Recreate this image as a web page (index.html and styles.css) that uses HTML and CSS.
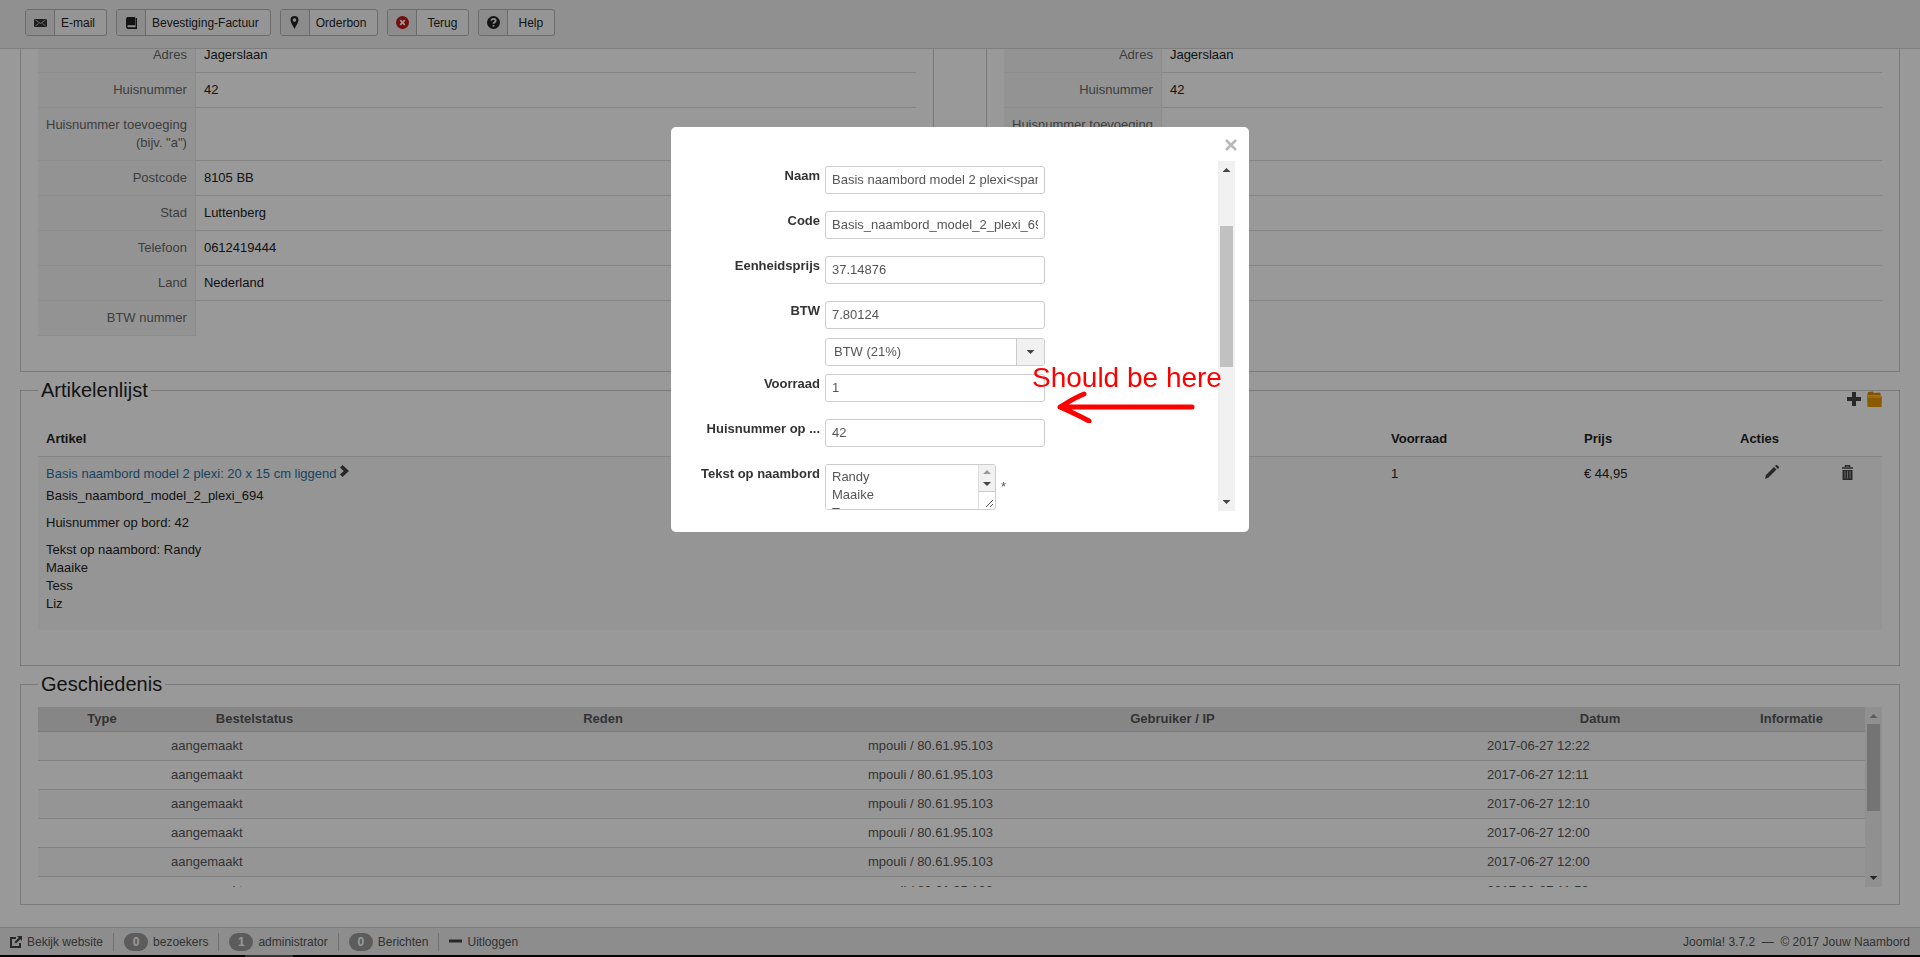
FILE: index.html
```
<!DOCTYPE html>
<html lang="nl">
<head>
  <meta charset="UTF-8">
  <meta name="viewport" content="width=device-width, initial-scale=1.0">
  <title>Bestelling - Jouw Naambord</title>
  <link rel="stylesheet" href="styles.css">
</head>
<body>
  <div class="toolbar">
    <button class="btn"><span class="btn-icon"><svg width="13" height="8" viewBox="0 0 13 8"><rect width="13" height="8" rx="1" fill="#333"/><path d="M1.500 1l5 3.500 5-3.500M1.500 7l3-2.500M11.500 7l-3-2.500" fill="none" stroke="#ddd" stroke-width=".8"/></svg></span><span class="btn-text">E-mail</span></button>
    <button class="btn"><span class="btn-icon"><svg width="11" height="12" viewBox="0 0 12 13"><path d="M2 0h8v9H2.500a1 1 0 000 2H10.500V1H12v12H2.500A2.500 2.500 0 010 10.500V2a2 2 0 012-2z" fill="#222"/></svg></span><span class="btn-text">Bevestiging-Factuur</span></button>
    <button class="btn"><span class="btn-icon"><svg width="9" height="13" viewBox="0 0 9 13"><path d="M4.500 0a4 4 0 014 4c0 2.500-2.500 5.500-4 9-1.500-3.500-4-6.500-4-9a4 4 0 014-4zm0 2.300a1.800 1.800 0 100 3.600 1.800 1.800 0 000-3.600z" fill="#222" fill-rule="evenodd"/></svg></span><span class="btn-text">Orderbon</span></button>
    <button class="btn btn-short"><span class="btn-icon"><svg width="13" height="13" viewBox="0 0 13 13"><circle cx="6.500" cy="6.500" r="6.500" fill="#bd1818"/><path d="M4.200 4.200l4.600 4.600M8.800 4.200L4.200 8.800" stroke="#fff" stroke-width="1.800"/></svg></span><span class="btn-text">Terug</span></button>
    <button class="btn btn-short"><span class="btn-icon"><svg width="13" height="13" viewBox="0 0 13 13"><circle cx="6.500" cy="6.500" r="6.500" fill="#222"/><path d="M4.300 4.800c0-2.600 4.400-2.500 4.400 0 0 1.500-2.200 1.500-2.200 3M6.500 9v1.600" fill="none" stroke="#eee" stroke-width="1.800"/></svg></span><span class="btn-text">Help</span></button>
  </div>

  <div class="main">
    <div class="addresses">
      <fieldset class="address">
        <table class="keys">
          <tr><th>Adres</th><td>Jagerslaan</td></tr>
          <tr><th>Huisnummer</th><td>42</td></tr>
          <tr><th>Huisnummer toevoeging<br>(bijv. "a")</th><td></td></tr>
          <tr><th>Postcode</th><td>8105 BB</td></tr>
          <tr><th>Stad</th><td>Luttenberg</td></tr>
          <tr><th>Telefoon</th><td>0612419444</td></tr>
          <tr><th>Land</th><td>Nederland</td></tr>
          <tr><th>BTW nummer</th><td></td></tr>
        </table>
      </fieldset>
      <fieldset class="address">
        <table class="keys">
          <tr><th>Adres</th><td>Jagerslaan</td></tr>
          <tr><th>Huisnummer</th><td>42</td></tr>
          <tr><th>Huisnummer toevoeging<br>(bijv. "a")</th><td></td></tr>
          <tr><th>Postcode</th><td></td></tr>
          <tr><th>Stad</th><td></td></tr>
          <tr><th>Telefoon</th><td></td></tr>
          <tr><th>Land</th><td></td></tr>
          <tr><th>BTW nummer</th><td></td></tr>
        </table>
      </fieldset>
    </div>

    <fieldset>
      <legend>Artikelenlijst</legend>
      <div class="list-tools">
        <a href="#" aria-label="Toevoegen"><svg width="14" height="14" viewBox="0 0 14 14"><path d="M5 0h4v5h5v4H9v5H5V9H0V5h5z" fill="#444"/></svg></a>
        <a href="#" aria-label="Artikelen"><svg width="15" height="16" viewBox="0 0 15 16"><path d="M1 1l5-.500L7 2l6-.500 1 3H0z" fill="#d98a00"/><path d="M0 5h15l-.500 11H.500z" fill="#e89500"/><path d="M0 5h15v2H0z" fill="#ffb020"/></svg></a>
      </div>
      <table class="articles">
        <thead>
          <tr><th>Artikel</th><th class="col-stock">Voorraad</th><th class="col-price">Prijs</th><th class="col-edit">Acties</th><th class="col-delete"></th></tr>
        </thead>
        <tbody>
          <tr>
            <td>
              <div class="article-name"><a href="#">Basis naambord model 2 plexi: 20 x 15 cm liggend</a><svg width="9" height="12" viewBox="0 0 9 12"><path d="M0 2.500L2.500 0 9 6l-6.500 6L0 9.500 3.700 6z" fill="#444"/></svg></div>
              Basis_naambord_model_2_plexi_694
              <p>Huisnummer op bord: 42</p>
              <p>Tekst op naambord: Randy<br>Maaike<br>Tess<br>Liz</p>
            </td>
            <td>1</td>
            <td>€ 44,95</td>
            <td class="action"><a href="#" aria-label="Bewerken"><svg width="14" height="14" viewBox="0 0 14 14"><path d="M0 14l1-4 8-8 2.500 2.500-8 8zM10 1l1-1h1l2 2v1l-1 1z" fill="#444"/></svg></a></td>
            <td class="action"><a href="#" aria-label="Verwijderen"><svg width="11" height="15" viewBox="0 0 11 15"><path d="M3.500 2V.700h4V2M0 3h11" fill="none" stroke="#444" stroke-width="1.500"/><path d="M.500 5h10v10H.500z" fill="#444"/><path d="M3 6v7.500M5.500 6v7.500M8 6v7.500" stroke="#aaa"/></svg></a></td>
          </tr>
        </tbody>
      </table>
    </fieldset>

    <fieldset>
      <legend>Geschiedenis</legend>
      <div class="history">
        <div class="history-rows">
          <table>
            <thead>
              <tr><th class="w-type">Type</th><th class="w-status">Bestelstatus</th><th>Reden</th><th class="w-user">Gebruiker / IP</th><th class="w-date">Datum</th><th class="w-info">Informatie</th></tr>
            </thead>
            <tbody>
              <tr><td></td><td>aangemaakt</td><td></td><td>mpouli / 80.61.95.103</td><td>2017-06-27 12:22</td><td></td></tr>
              <tr><td></td><td>aangemaakt</td><td></td><td>mpouli / 80.61.95.103</td><td>2017-06-27 12:11</td><td></td></tr>
              <tr><td></td><td>aangemaakt</td><td></td><td>mpouli / 80.61.95.103</td><td>2017-06-27 12:10</td><td></td></tr>
              <tr><td></td><td>aangemaakt</td><td></td><td>mpouli / 80.61.95.103</td><td>2017-06-27 12:00</td><td></td></tr>
              <tr><td></td><td>aangemaakt</td><td></td><td>mpouli / 80.61.95.103</td><td>2017-06-27 12:00</td><td></td></tr>
              <tr><td></td><td>aangemaakt</td><td></td><td>mpouli / 80.61.95.103</td><td>2017-06-27 11:59</td><td></td></tr>
            </tbody>
          </table>
        </div>
        <div class="scrollbar"><span class="arrow up off"></span><span class="thumb"></span><span class="arrow down"></span></div>
      </div>
    </fieldset>
  </div>

  <div class="footer">
    <div class="status">
      <a class="item" href="#"><svg width="12" height="12" viewBox="0 0 12 12"><path d="M6 2H1v9h9V7" fill="none" stroke="#444" stroke-width="2"/><path d="M7 0h5v5l-1.700-1.700L6 7.600 4.400 6l4.300-4.300z" fill="#444"/></svg>Bekijk website</a>
      <span class="item"><span class="badge">0</span>bezoekers</span>
      <span class="item"><span class="badge">1</span>administrator</span>
      <a class="item" href="#"><span class="badge">0</span>Berichten</a>
      <a class="item" href="#"><svg width="13" height="12" viewBox="0 0 13 12"><path d="M0 5h13" stroke="#444" stroke-width="3"/></svg>Uitloggen</a>
    </div>
    <div>Joomla! 3.7.2 &nbsp;—&nbsp; © 2017 Jouw Naambord</div>
  </div>

  <div class="overlay">
    <div class="modal">
      <button class="close" aria-label="Sluiten"><svg width="12" height="12" viewBox="0 0 12 12"><path d="M1 1l10 10M11 1L1 11" stroke="#b8b8b8" stroke-width="2.500"/></svg></button>
      <div class="modal-body">
        <form class="form">
          <div class="row"><label for="naam">Naam</label><input type="text" id="naam" value="Basis naambord model 2 plexi&lt;span&gt;"></div>
          <div class="row"><label for="code">Code</label><input type="text" id="code" value="Basis_naambord_model_2_plexi_694"></div>
          <div class="row"><label for="prijs">Eenheidsprijs</label><input type="text" id="prijs" value="37.14876"></div>
          <div class="row row-tax">
            <label for="btw">BTW</label>
            <div class="tax">
              <input type="text" id="btw" value="7.80124">
              <div class="select">
                <select aria-label="BTW tarief"><option>BTW (21%)</option></select>
                <span class="select-arrow"><span class="arrow down"></span></span>
              </div>
            </div>
          </div>
          <div class="row"><label for="voorraad">Voorraad</label><input type="text" id="voorraad" value="1"></div>
          <div class="row"><label for="huisnummer">Huisnummer op ...</label><input type="text" id="huisnummer" value="42"></div>
          <div class="row">
            <label for="tekst">Tekst op naambord</label>
            <div class="area">
              <div class="area-box">
                <textarea id="tekst">Randy
Maaike
Tess
Liz</textarea>
                <div class="area-side">
                  <div class="area-scroll"><span class="arrow up off"></span><span class="arrow down"></span></div>
                  <svg width="16" height="17" viewBox="0 0 16 17"><path d="M7 15l7-7M11 15l3-3" stroke="#555"/></svg>
                </div>
              </div>
              <span>*</span>
            </div>
          </div>
        </form>
        <div class="scrollbar"><span class="arrow up"></span><span class="thumb"></span><span class="arrow down"></span></div>
      </div>
      <div class="note">
        Should be here
        <svg width="140" height="32" viewBox="0 0 140 32"><path d="M136 16H4C12 11 20 6 28 3M4 16c9 4 20 9 29 14" fill="none" stroke="#f00" stroke-width="5" stroke-linecap="round" stroke-linejoin="round"/></svg>
      </div>
    </div>
  </div>
  <div class="taskbar"></div>
</body>
</html>
```
FILE: styles.css
```
* {
  box-sizing: border-box;
}

body {
  margin: 0;
  background: #fff;
  color: #222;
  font-family: "Liberation Sans", Arial, sans-serif;
  font-size: 13px;
  line-height: 18px;
}

svg {
  display: block;
}

a {
  color: inherit;
  text-decoration: none;
}

/* toolbar */
.toolbar {
  position: fixed;
  top: 0;
  left: 0;
  right: 0;
  z-index: 1;
  display: flex;
  gap: 9px;
  height: 49px;
  padding: 9px 25px;
  background: #f0f0f0;
  border-bottom: 1px solid #d4d4d4;
}

.btn {
  display: flex;
  align-items: stretch;
  height: 27px;
  padding: 0;
  border: 1px solid #b3b3b3;
  border-radius: 3px;
  background: #f9f9f9;
  color: #222;
  font-family: inherit;
  font-size: 12px;
  line-height: 26px;
  overflow: hidden;
}

.btn-icon {
  display: flex;
  align-items: center;
  justify-content: center;
  width: 29px;
  background: #e9e9e9;
  border-right: 1px solid #b3b3b3;
}

.btn-text {
  padding: 0 11px 0 6px;
}

.btn-short .btn-text {
  padding: 0 11px 0 10px;
}

/* content */
.main {
  padding: 0 20px;
}

fieldset {
  position: relative;
  min-width: 0;
  margin: 0;
  padding: 5px 17px 17px;
  border: 1px solid #ccc;
}

legend {
  padding: 0 3px;
  font-size: 20px;
  line-height: 36px;
}

table {
  width: 100%;
  border-collapse: separate;
  border-spacing: 0;
}

.addresses {
  display: grid;
  grid-template-columns: 1fr 1fr;
  gap: 52px;
}

.address {
  padding: 38px 17px 35px;
  border-top: none;
}

.keys th {
  width: 157px;
  padding: 8px;
  background: #f6f6f6;
  border-right: 1px solid #e9e9e9;
  border-bottom: 1px solid #e9e9e9;
  color: #666;
  font-weight: normal;
  text-align: right;
  white-space: nowrap;
}

.keys td {
  padding: 8px;
  border-bottom: 1px solid #ddd;
  vertical-align: top;
}

.keys tr:last-child td {
  border-bottom: none;
}

.list-tools {
  position: absolute;
  top: -17px;
  right: 17px;
  display: flex;
  align-items: center;
  gap: 6px;
}

.articles {
  table-layout: fixed;
  margin: 9px 0 18px;
}

.articles th,
.articles td {
  padding: 8px;
  text-align: left;
  vertical-align: top;
}

.articles th {
  border-bottom: 1px solid #ddd;
}

.articles td {
  background: #f9f9f9;
}

.articles p {
  margin: 9px 0;
}

.col-stock { width: 193px; }
.col-price { width: 156px; }
.col-edit { width: 80px; }
.col-delete { width: 70px; }

.articles .action svg {
  margin: 0 auto;
}

.article-name {
  display: flex;
  gap: 3px;
  height: 22px;
}

.article-name a {
  color: #2a70a0;
}

.history {
  display: flex;
  height: 180px;
}

.history-rows {
  flex: 1;
  overflow: hidden;
  color: #555;
}

.history table {
  table-layout: fixed;
}

.history th {
  padding: 3px 5px;
  background: #e0e0e0;
  border-bottom: 1px solid #ccc;
}

.history td {
  padding: 5px;
  height: 29px;
  border-bottom: 1px solid #d8d8d8;
}

.history tbody tr:nth-child(odd) {
  background: #f9f9f9;
}

.w-type { width: 128px; }
.w-status { width: 177px; }
.w-user { width: 619px; }
.w-date { width: 236px; }
.w-info { width: 147px; }

/* scrollbars */
.scrollbar {
  display: flex;
  flex-direction: column;
  align-items: center;
  width: 17px;
  padding: 7px 0;
  background: #f1f1f1;
}

.arrow {
  width: 8px;
  height: 4px;
  background: #444;
}

.arrow.up { clip-path: polygon(50% 0, 100% 100%, 0 100%); }
.arrow.down { clip-path: polygon(0 0, 100% 0, 50% 100%); }
.arrow.off { background: #999; }

.thumb {
  width: 13px;
  background: #c1c1c1;
}

.scrollbar .down {
  margin-top: auto;
}

.history .thumb {
  height: 87px;
  margin-top: 6px;
}

.modal .thumb {
  height: 141px;
  margin-top: 54px;
}

/* footer */
.footer {
  position: fixed;
  left: 0;
  right: 0;
  bottom: 2px;
  display: flex;
  justify-content: space-between;
  align-items: center;
  height: 28px;
  padding: 0 10px;
  background: #ebebeb;
  border-top: 1px solid #d0d0d0;
  color: #555;
  font-size: 12px;
}

.status {
  display: flex;
}

.item {
  display: flex;
  align-items: center;
  gap: 5px;
  padding-right: 10px;
  margin-right: 10px;
  border-right: 1px solid #bbb;
  line-height: 16px;
}

.item:last-child {
  border-right: none;
}

.badge {
  min-width: 24px;
  border-radius: 9px;
  background: #999;
  color: #fff;
  font-weight: bold;
  line-height: 18px;
  text-align: center;
}

.taskbar {
  position: fixed;
  left: 0;
  right: 0;
  bottom: 0;
  height: 2px;
  background: linear-gradient(to right, #000 245px, #333 245px, #333 293px, #000 293px);
}

/* modal */
.overlay {
  position: fixed;
  top: 0;
  right: 0;
  bottom: 2px;
  left: 0;
  z-index: 2;
  display: flex;
  justify-content: center;
  align-items: flex-start;
  padding-top: 127px;
  background: rgba(0, 0, 0, 0.4);
}

.modal {
  position: relative;
  width: 578px;
  padding: 34px 14px 21px 0;
  background: #fff;
  border-radius: 5px;
}

.close {
  position: absolute;
  top: 12px;
  right: 12px;
  padding: 0;
  border: none;
  background: none;
}

.modal-body {
  display: flex;
  height: 350px;
}

.form {
  flex: 1;
  padding-top: 5px;
  overflow: hidden;
}

.row {
  display: flex;
  gap: 5px;
  margin-bottom: 17px;
}

.row-tax {
  margin-bottom: 8px;
}

.row > label {
  width: 149px;
  padding-top: 1px;
  color: #333;
  font-weight: bold;
  text-align: right;
}

.row input,
.select,
.area-box {
  width: 220px;
  height: 28px;
  border: 1px solid #ccc;
  border-radius: 3px;
  background: #fff;
}

.row input {
  padding: 3px 6px 5px;
}

input,
select,
textarea {
  color: #555;
  font-family: inherit;
  font-size: 13px;
  line-height: 18px;
}

.tax {
  display: grid;
  gap: 9px;
}

.select {
  display: flex;
  overflow: hidden;
}

.select select {
  flex: 1;
  appearance: none;
  padding: 0 8px;
  border: none;
  background: none;
}

.select-arrow {
  display: flex;
  align-items: center;
  justify-content: center;
  width: 28px;
  background: #f1f1f1;
  border-left: 1px solid #ccc;
}

.area {
  display: flex;
  align-items: center;
  gap: 5px;
  color: #555;
}

.area .area-box {
  display: flex;
  width: 171px;
  height: 46px;
  overflow: hidden;
}

.area textarea {
  flex: 1;
  min-width: 0;
  padding: 3px 6px 0;
  border: none;
  resize: none;
  overflow: hidden;
}

.area-side {
  width: 17px;
  border-left: 1px solid #ddd;
}

.area-scroll {
  display: flex;
  flex-direction: column;
  align-items: center;
  justify-content: space-between;
  height: 27px;
  padding: 5px 0;
  background: #f1f1f1;
  border-bottom: 1px solid #ccc;
}

/* red remark over the form */
.note {
  position: absolute;
  top: 235px;
  left: 361px;
  color: #f00;
  font-size: 28px;
  line-height: 32px;
  white-space: nowrap;
}

.note svg {
  margin: -3px 0 0 24px;
}
```
